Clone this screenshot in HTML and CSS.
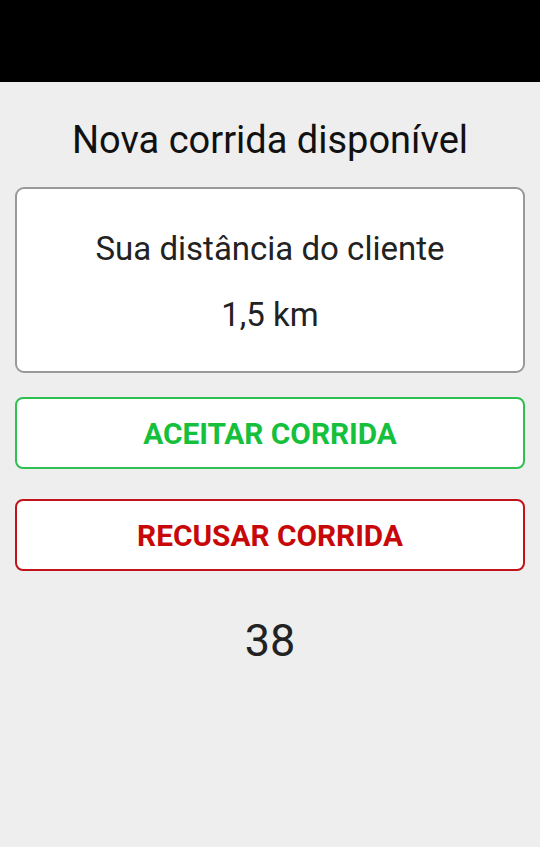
FILE: index.html
```html
<!DOCTYPE html>
<html lang="pt-BR">
<head>
<meta charset="utf-8">
<title>Nova corrida</title>
<link rel="stylesheet" href="styles.css">
</head>
<body>
<div class="statusbar"></div>
<main class="screen">
  <h1 class="title">Nova corrida disponível</h1>
  <section class="card">
    <p class="card-label">Sua distância do cliente</p>
    <p class="card-value">1,5 km</p>
  </section>
  <button class="btn btn-accept">ACEITAR CORRIDA</button>
  <button class="btn btn-reject">RECUSAR CORRIDA</button>
  <div class="timer">38</div>
</main>
</body>
</html>
```
FILE: styles.css
```css
html, body {
  margin: 0;
  padding: 0;
  height: 100%;
}
body {
  background: #eeeeee;
  font-family: Roboto, "Noto Sans", sans-serif;
  color: #222;
}
.statusbar {
  height: 82px;
  background: #000;
}
.screen {
  display: flex;
  flex-direction: column;
  padding: 0 15px;
}
.title {
  margin: 36px 0 25px;
  font-size: 38px;
  font-weight: 400;
  color: #111;
  text-align: center;
  line-height: 44px;
}
.card {
  box-sizing: border-box;
  height: 186px;
  background: #fff;
  border: 2px solid #999;
  border-radius: 9px;
  display: flex;
  flex-direction: column;
  align-items: center;
  padding-top: 40px;
}
.card-label {
  margin: 0;
  font-size: 33px;
  line-height: 40px;
  color: #222;
}
.card-value {
  margin: 26px 0 0;
  font-size: 33px;
  line-height: 40px;
  color: #222;
}
.btn {
  box-sizing: border-box;
  height: 72px;
  background: #fff;
  border-radius: 8px;
  border: 2px solid;
  font-family: Roboto, "Noto Sans", sans-serif;
  font-weight: 700;
  font-size: 29.8px;
  text-align: center;
  padding: 0;
}
.btn-accept {
  margin-top: 24px;
  border-color: #2fc052;
  color: #14c03c;
}
.btn-reject {
  margin-top: 30px;
  border-color: #c0141a;
  color: #c80808;
}
.timer {
  margin-top: 44px;
  text-align: center;
  font-size: 45px;
  line-height: 52px;
  color: #222;
}
```
